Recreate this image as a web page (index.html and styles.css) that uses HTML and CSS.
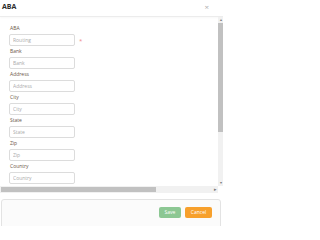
FILE: index.html
```html
<!DOCTYPE html>
<html>
<head>
<meta charset="utf-8">
<link rel="stylesheet" href="styles.css">
</head>
<body>
<div class="modal">
  <div class="header">
    <span class="title">ABA</span>
    <span class="close">×</span>
  </div>
  <div class="body-row">
    <div class="content">
      <div class="field">
        <div class="label">ABA</div>
        <div class="input-row"><input class="input" placeholder="Routing"><span class="req">*</span></div>
      </div>
      <div class="field">
        <div class="label">Bank</div>
        <div class="input-row"><input class="input" placeholder="Bank"></div>
      </div>
      <div class="field">
        <div class="label">Address</div>
        <div class="input-row"><input class="input" placeholder="Address"></div>
      </div>
      <div class="field">
        <div class="label">City</div>
        <div class="input-row"><input class="input" placeholder="City"></div>
      </div>
      <div class="field">
        <div class="label">State</div>
        <div class="input-row"><input class="input" placeholder="State"></div>
      </div>
      <div class="field">
        <div class="label">Zip</div>
        <div class="input-row"><input class="input" placeholder="Zip"></div>
      </div>
      <div class="field">
        <div class="label">Country</div>
        <div class="input-row"><input class="input" placeholder="Country"></div>
      </div>
    </div>
    <div class="vscroll">
      <div class="arrow up">▴</div>
      <div class="vthumb"></div>
      <div class="vtrack"></div>
      <div class="arrow down">▾</div>
    </div>
  </div>
  <div class="hscroll">
    <div class="htrack">
      <div class="hthumb"></div>
      <div class="hspace"></div>
      <div class="harrow">▸</div>
    </div>
    <div class="corner"></div>
  </div>
  <div class="footer">
    <div class="footer-box">
      <button class="btn save">Save</button>
      <button class="btn cancel">Cancel</button>
    </div>
  </div>
</div>
</body>
</html>
```

FILE: styles.css
```css
* { box-sizing: border-box; }
html, body { margin: 0; padding: 0; background: #fff; }
body { width: 223px; height: 226px; overflow: hidden; font-family: "Open Sans", "Liberation Sans", sans-serif; }

.modal { display: flex; flex-direction: column; width: 223px; height: 226px; }

.header {
  height: 17px;
  flex: none;
  display: flex;
  align-items: center;
  justify-content: space-between;
  padding: 0 14px 3px 2px;
  border-bottom: 1px solid #ececec;
  box-shadow: 0 1px 2px rgba(0,0,0,0.03);
}
.title { font-size: 7px; font-weight: 700; color: #2b2b2b; }
.close { font-size: 8px; color: #b0b0b0; line-height: 1; }

.body-row { display: flex; height: 169px; flex: none; }
.content { flex: 1; padding: 6px 0 0 9px; overflow: hidden; }

.field { display: flex; flex-direction: column; height: 23px; }
.label { height: 11px; line-height: 11px; font-size: 5px; color: #6a5648; padding-left: 1px; }
.input-row { display: flex; align-items: center; height: 12px; }
.input {
  width: 66px;
  height: 12px;
  border: 1px solid #dcdcdc;
  border-radius: 2px;
  padding: 0 3px;
  font-family: inherit;
  font-size: 5px;
  color: #555;
  background: #fff;
  outline: none;
}
.input::placeholder { color: #aaa; }
.req { margin-left: 4px; color: #f08a8a; font-size: 6px; line-height: 1; padding-top: 2px; }

.vscroll { width: 5px; flex: none; display: flex; flex-direction: column; background: #f1f1f1; }
.arrow { height: 6px; font-size: 4px; line-height: 6px; text-align: center; color: #777; }
.vthumb { height: 109px; background: #c1c1c1; }
.vtrack { flex: 1; }

.hscroll { display: flex; height: 7px; flex: none; }
.htrack { flex: 1; display: flex; align-items: center; background: #f1f1f1; padding-left: 1px; }
.hthumb { width: 155px; height: 5px; background: #c1c1c1; }
.hspace { flex: 1; }
.harrow { width: 6px; font-size: 5px; line-height: 7px; color: #777; text-align: center; }
.corner { width: 5px; background: #fff; }

.footer { flex: 1; padding: 6px 2px 0 1px; }
.footer-box {
  height: 40px;
  border: 1px solid #e3e3e3;
  border-radius: 3px;
  background: #fbfbfb;
  display: flex;
  justify-content: flex-end;
  align-items: flex-start;
  gap: 4px;
  padding: 7px 8px 0 0;
}
.btn {
  height: 11px;
  border: none;
  border-radius: 2px;
  padding: 0;
  font-family: inherit;
  font-size: 5px;
  color: #fff;
  line-height: 11px;
}
.save { width: 22px; background: #8cc793; }
.cancel { width: 27px; background: #f7a02c; }
```
